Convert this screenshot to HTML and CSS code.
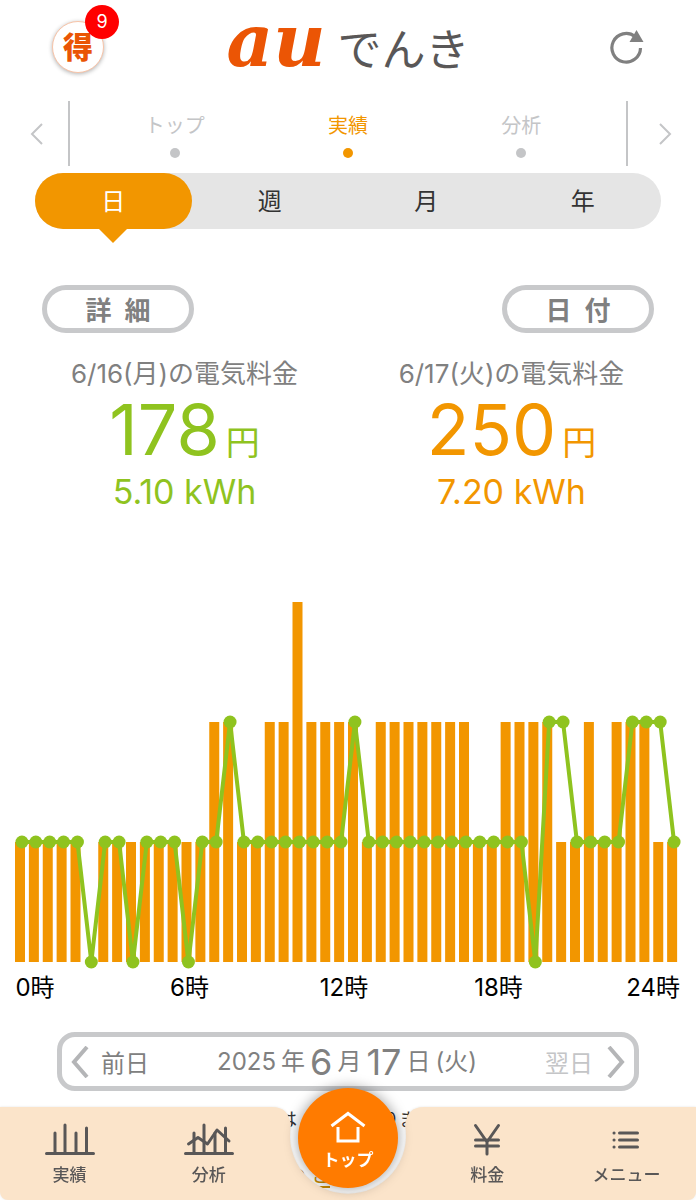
FILE: index.html
```html
<!DOCTYPE html>
<html lang="ja">
<head>
    <meta charset="UTF-8">
    <meta name="viewport" content="width=device-width, initial-scale=1.0">
    <title>auでんき</title>
    <link rel="stylesheet" href="styles.css">
</head>
<body>
    <!-- Header -->
    <header class="header">
        <button class="offer-btn" type="button">得<span class="badge">9</span></button>
        <h1 class="logo"><span class="logo-au">au</span><span class="logo-denki">でんき</span></h1>
        <button class="reload-btn" type="button" aria-label="更新">
            <svg width="34" height="36" viewBox="0 0 34 36">
                <path d="M30.5 19A14.3 14.3 0 1 1 25 7.500" fill="none" stroke="#808080" stroke-width="3.200"/>
                <path d="M26.500 1L33.500 13L19.500 13Z" fill="#808080"/>
            </svg>
        </button>
    </header>

    <!-- Page tabs -->
    <nav class="tabs">
        <button class="tab-arrow" type="button" aria-label="前へ">
            <svg width="14" height="22" viewBox="0 0 14 22"><path d="M12 1L2 11L12 21" fill="none" stroke="#c4c5c7" stroke-width="2"/></svg>
        </button>
        <div class="tab-list">
            <a class="tab" href="#">トップ</a>
            <a class="tab active" href="#">実績</a>
            <a class="tab" href="#">分析</a>
        </div>
        <button class="tab-arrow" type="button" aria-label="次へ">
            <svg width="14" height="22" viewBox="0 0 14 22"><path d="M2 1L12 11L2 21" fill="none" stroke="#c4c5c7" stroke-width="2"/></svg>
        </button>
    </nav>

    <main>
        <!-- Period switch -->
        <div class="period">
            <button class="period-btn active" type="button">日</button>
            <button class="period-btn" type="button">週</button>
            <button class="period-btn" type="button">月</button>
            <button class="period-btn" type="button">年</button>
        </div>

        <div class="actions">
            <button class="pill-btn" type="button">詳&ensp;細</button>
            <button class="pill-btn" type="button">日&ensp;付</button>
        </div>

        <!-- Daily totals -->
        <div class="totals">
            <section class="total green">
                <h2>6/16(月)の電気料金</h2>
                <p class="price">178<span class="yen">円</span></p>
                <p class="kwh">5.10 kWh</p>
            </section>
            <section class="total orange">
                <h2>6/17(火)の電気料金</h2>
                <p class="price">250<span class="yen">円</span></p>
                <p class="kwh">7.20 kWh</p>
            </section>
        </div>

        <!-- Half-hourly chart -->
        <div class="chart">
            <svg id="chart" viewBox="0 0 666 366" role="img" aria-label="電気使用量"></svg>
            <div class="hours">
                <span>0時</span>
                <span>6時</span>
                <span>12時</span>
                <span>18時</span>
                <span>24時</span>
            </div>
        </div>

        <!-- Date navigation -->
        <div class="date-nav">
            <button class="day-btn" type="button">
                <svg width="18" height="32" viewBox="0 0 18 32"><path d="M16 1L3 16L16 31" fill="none" stroke="#b4b5b7" stroke-width="4"/></svg>
                前日
            </button>
            <p class="date"><span>2025</span><span>年</span><strong>6</strong><span>月</span><strong>17</strong><span>日</span><span>(火)</span></p>
            <button class="day-btn next" type="button">
                翌日
                <svg width="18" height="32" viewBox="0 0 18 32"><path d="M2 1L15 16L2 31" fill="none" stroke="#b4b5b7" stroke-width="4"/></svg>
            </button>
        </div>

        <div class="note"><span>は</span><span>りま</span></div>
        <div class="note-link"><span>の</span><a href="#">ご</a></div>
    </main>

    <!-- Bottom navigation -->
    <nav class="bottom-nav">
        <div class="nav-bg">
            <div class="nav-side left"></div>
            <svg class="nav-notch" width="152" height="93" viewBox="0 0 152 93">
                <path d="M0 0C12 0 17 6 19 18A58 58 0 1 0 133 18C135 6 140 0 152 0V93H0Z" fill="#fbe4ca"/>
            </svg>
            <div class="nav-side right"></div>
        </div>
        <a class="nav-item" href="#">
            <svg width="50" height="34" viewBox="0 0 50 34" fill="none" stroke="#595757" stroke-width="3" stroke-linecap="round">
                <path d="M1.500 31.500H48.500M10 31V11M20 31V3M31 31V11M41.500 31V6"/>
            </svg>
            実績
        </a>
        <a class="nav-item" href="#">
            <svg width="50" height="34" viewBox="0 0 50 34" fill="none" stroke="#595757" stroke-width="3" stroke-linecap="round">
                <path d="M1.500 31.500H48.500M10 31V11M20 31V3M31 31V11M41.500 31V6"/>
                <path d="M4.500 22L14 15.500L23.500 22L33 8L45 19" stroke-linejoin="round"/>
            </svg>
            分析
        </a>
        <a class="nav-item home" href="#">
            <span class="home-circle">
                <svg width="36" height="32" viewBox="0 0 36 32" fill="none" stroke="#fff" stroke-width="3">
                    <path d="M1.500 15L18 2.500L34.500 15M8 16V30H28V16"/>
                </svg>
                トップ
            </span>
        </a>
        <a class="nav-item" href="#">
            <svg width="50" height="34" viewBox="0 0 50 34" fill="none" stroke="#595757" stroke-width="3" stroke-linecap="round">
                <path d="M13.500 3.500L25 20L36.500 3.500M25 20V32M13.500 18H36.500M13.500 24H36.500"/>
            </svg>
            料金
        </a>
        <a class="nav-item" href="#">
            <svg width="50" height="34" viewBox="0 0 50 34" fill="none" stroke="#595757" stroke-width="3" stroke-linecap="round">
                <path d="M18.500 11H36.500M18.500 18H36.500M18.500 25H36.500M13 11H13.100M13 18H13.100M13 25H13.100"/>
            </svg>
            メニュー
        </a>
    </nav>

    <script>
        // Usage per 30 minutes, in units of 0.1 kWh
        const today = [1,1,1,1,1,0,1,1,1,1,1,1,1,1,2,2,1,1,2,2,3,2,2,2,2,1,2,2,2,2,2,2,2,1,1,2,2,2,2,1,1,2,1,2,2,2,1,1];
        const yesterday = [1,1,1,1,1,0,1,1,0,1,1,1,0,1,1,2,1,1,1,1,1,1,1,1,2,1,1,1,1,1,1,1,1,1,1,1,1,0,2,2,1,1,1,1,2,2,2,1];

        const slot = 666 / 48;
        const unit = 120;
        const base = 360;
        let bars = '';
        let dots = '';
        const points = [];

        today.forEach((value, i) => {
            bars += `<rect class="bar" x="${i * slot}" y="${base - value * unit}" width="10" height="${value * unit}"/>`;
        });

        yesterday.forEach((value, i) => {
            const x = (i + 0.5) * slot;
            const y = base - value * unit;
            points.push(x + ',' + y);
            dots += `<circle class="dot" cx="${x}" cy="${y}" r="6.5"/>`;
        });

        document.getElementById('chart').innerHTML = bars + `<polyline class="line" points="${points.join(' ')}"/>` + dots;
    </script>
</body>
</html>
```

FILE: styles.css
```css
* {
    box-sizing: border-box;
}
body {
    margin: 0;
    background-color: #fff;
    color: #808080;
    font-family: Inter, "Noto Sans CJK JP", sans-serif;
    overflow-x: hidden;
}
h1, h2, p {
    margin: 0;
    font-weight: normal;
}
button {
    padding: 0;
    border: none;
    background: none;
    color: inherit;
    font-family: inherit;
    cursor: pointer;
}
a {
    color: inherit;
    text-decoration: none;
}
svg {
    display: block;
}

/* Header */
.header {
    display: grid;
    grid-template-columns: 1fr auto 1fr;
    align-items: center;
    height: 94px;
    padding: 0 52px;
}
.offer-btn {
    position: relative;
    width: 52px;
    height: 52px;
    border: 1px solid #f8c4a8;
    border-radius: 50%;
    background-color: #fff;
    box-shadow: 0 1px 4px rgba(0, 0, 0, 0.3);
    color: #ea5504;
    font-size: 30px;
    font-weight: 900;
    line-height: 48px;
}
.badge {
    position: absolute;
    top: -17px;
    right: -16px;
    width: 34px;
    height: 34px;
    border-radius: 50%;
    background-color: #f00;
    color: #fff;
    font-size: 18px;
    font-weight: 400;
    line-height: 34px;
}
.logo {
    display: flex;
    align-items: baseline;
    gap: 12px;
    padding-bottom: 12px;
    line-height: 1;
}
.logo-au {
    color: #eb5505;
    font-family: "DejaVu Serif", serif;
    font-size: 72px;
    font-style: italic;
    font-weight: bold;
}
.logo-denki {
    color: #595757;
    font-size: 44px;
}
.reload-btn {
    justify-self: end;
}

/* Page tabs */
.tabs {
    display: flex;
    align-items: center;
    height: 79px;
}
.tab-arrow {
    display: flex;
    justify-content: center;
    flex: 0 0 68px;
    padding-left: 6px;
}
.tab-list {
    display: flex;
    flex: 1;
    height: 65px;
    border-left: 2px solid #c4c5c7;
    border-right: 2px solid #c4c5c7;
    padding: 0 18px;
}
.tab {
    display: flex;
    flex-direction: column;
    align-items: center;
    flex: 1;
    gap: 8px;
    padding-top: 11px;
    color: #c4c5c7;
    font-size: 20px;
    line-height: 28px;
}
.tab::after {
    content: "";
    width: 10px;
    height: 10px;
    border-radius: 50%;
    background-color: currentColor;
}
.tab.active {
    color: #f29600;
}

/* Period switch */
.period {
    display: flex;
    margin: 0 35px;
    border-radius: 28px;
    background-color: #e5e5e5;
}
.period-btn {
    position: relative;
    flex: 1;
    height: 56px;
    padding-bottom: 3px;
    border-radius: 28px;
    color: #333;
    font-size: 24px;
}
.period-btn.active {
    background-color: #f29600;
    color: #fff;
}
.period-btn.active::after {
    content: "";
    position: absolute;
    top: 100%;
    left: 50%;
    margin: -1px 0 0 -15px;
    border: 15px solid transparent;
    border-top-color: #f29600;
    border-bottom: 0;
}

.actions {
    display: flex;
    justify-content: space-between;
    margin: 56px 42px 0;
}
.pill-btn {
    width: 152px;
    height: 48px;
    padding-top: 3px;
    border: 5px solid #c8c9cb;
    border-radius: 24px;
    font-size: 26px;
    font-weight: bold;
    line-height: 35px;
}

/* Daily totals */
.totals {
    display: flex;
    padding: 0 21px;
    margin-top: 23px;
}
.total {
    flex: 1;
    text-align: center;
}
.total h2 {
    color: #808080;
    font-size: 26px;
    line-height: 36px;
}
.price {
    font-size: 70px;
    line-height: 76px;
}
.yen {
    margin-left: 6px;
    font-size: 34px;
    line-height: 1;
}
.kwh {
    font-size: 34px;
    line-height: 48px;
}
.green {
    color: #8fc31f;
}
.orange {
    color: #f29600;
}

/* Chart */
.chart {
    padding: 0 15px;
    margin-top: 86px;
}
.chart svg {
    width: 100%;
    overflow: visible;
}
.bar {
    fill: #f29600;
}
.line {
    fill: none;
    stroke: #8fc31f;
    stroke-width: 4;
}
.dot {
    fill: #8fc31f;
}
.hours {
    display: flex;
    justify-content: space-between;
    padding-right: 8px;
    color: #000;
    font-size: 24px;
    line-height: 36px;
    margin-top: 2px;
}
.hours span {
    display: flex;
    justify-content: center;
    width: 40px;
    white-space: nowrap;
}

/* Date navigation */
.date-nav {
    display: flex;
    justify-content: space-between;
    align-items: center;
    height: 59px;
    margin: 26px 57px 0;
    padding: 0 9px;
    border: 5px solid #c8c9cb;
    border-radius: 18px;
}
.day-btn {
    display: flex;
    align-items: center;
    gap: 12px;
    font-size: 24px;
}
.day-btn.next {
    gap: 14px;
    color: #c4c5c7;
}
.date {
    display: flex;
    align-items: center;
    gap: 5px;
    font-size: 24px;
    line-height: 48px;
}
.date strong {
    font-size: 36px;
    font-weight: 400;
}

.note {
    display: flex;
    justify-content: center;
    gap: 84px;
    margin-top: 15px;
    color: #333;
    font-size: 18px;
    line-height: 28px;
}
.note-link {
    display: flex;
    justify-content: center;
    gap: 6px;
    margin: 32px 78px 0 0;
    color: #c98a00;
    font-size: 18px;
    line-height: 20px;
}
.note-link a {
    border-bottom: 2px solid #c98a00;
}

/* Bottom navigation */
.bottom-nav {
    position: fixed;
    left: 0;
    right: 0;
    bottom: 0;
    display: grid;
    grid-template-columns: repeat(5, 1fr);
    height: 93px;
}
.nav-bg {
    position: absolute;
    inset: 0;
    display: flex;
    filter: drop-shadow(0 0 1px rgba(0, 0, 0, 0.1));
}
.nav-side {
    flex: 1;
    background-color: #fbe4ca;
}
.nav-side.left {
    border-bottom-left-radius: 8px;
}
.nav-side.right {
    border-bottom-right-radius: 8px;
}
.nav-item {
    position: relative;
    display: flex;
    flex-direction: column;
    align-items: center;
    gap: 6px;
    padding-top: 15px;
    color: #595757;
    font-size: 17px;
    font-weight: 500;
    line-height: 26px;
}
.nav-item.home {
    padding-top: 0;
}
.home-circle {
    position: absolute;
    top: -19px;
    display: flex;
    flex-direction: column;
    align-items: center;
    gap: 4px;
    width: 100px;
    height: 100px;
    padding-top: 23px;
    border-radius: 50%;
    background-color: #ff7b00;
    box-shadow: 0 0 14px rgba(0, 0, 0, 0.4);
    color: #fff;
    font-weight: bold;
}
```
